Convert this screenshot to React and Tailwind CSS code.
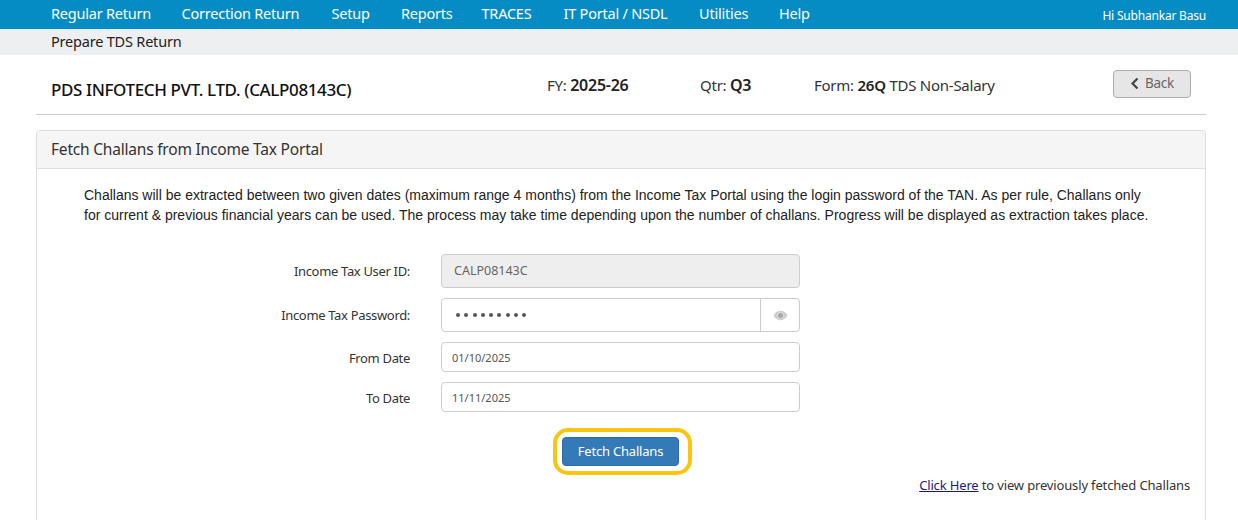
import React from "react";

const ui = "font-['Noto_Sans',sans-serif]";

const navItems = [
  ["Regular Return", "w-[130.5px]"],
  ["Correction Return", "w-[150px]"],
  ["Setup", "w-[69.5px]"],
  ["Reports", "w-[80.5px]"],
  ["TRACES", "w-[82px]"],
  ["IT Portal / NSDL", "w-[135.5px]"],
  ["Utilities", "w-[80px]"],
  ["Help", "w-[60px]"],
];

const FormRow = ({ label, className, labelClass = "pt-[1px]", children }) => (
  <div className={`flex items-center ${className}`}>
    <label className={`w-[410px] ${labelClass} text-right text-[13px] tracking-[-0.33px] text-[#333]`}>{label}</label>
    <div className="ml-[31px] w-[359px]">{children}</div>
  </div>
);

const App = () => {
  return (
    <div className={`${ui} w-[1238px] h-[520px] overflow-hidden bg-white`}>
      <nav className="h-[29px] bg-[#058cc4] flex items-center pl-[51px] pr-[32px] text-white">
        {navItems.map(([item, width]) => (
          <a key={item} className={`${width} pb-[2px] text-[14.5px] tracking-[-0.22px] whitespace-nowrap`}>
            {item}
          </a>
        ))}
        <span className="ml-auto text-[12px] tracking-[-0.2px] pt-[3px]">Hi Subhankar Basu</span>
      </nav>
      <div className="h-[26px] bg-[#eeeff1] pl-[51px] flex items-center text-[14.5px] tracking-[-0.2px] text-[#222]">
        Prepare TDS Return
      </div>

      <div className="ml-[36px] mr-[32px] h-[60px] border-b border-[#ccc] flex items-center px-[15px] text-[15px] tracking-[-0.25px] text-[#333]">
        <h1 className="w-[496px] text-[17px] font-medium tracking-[-0.38px] text-[#111] pt-[11px]">
          PDS INFOTECH PVT. LTD. (CALP08143C)
        </h1>
        <span className="w-[153px] pt-[1px]">
          FY: <b className="text-[16px] font-semibold text-[#222]">2025-26</b>
        </span>
        <span className="w-[114px] pt-[1px]">
          Qtr: <b className="text-[16px] font-semibold text-[#222]">Q3</b>
        </span>
        <span className="pt-[1px]">
          Form: <b className="font-semibold text-[#222]">26Q</b> TDS Non-Salary
        </span>
        <button className="ml-auto mb-[2px] w-[78px] h-[28px] rounded-[4px] border border-[#adadad] bg-[#e6e6e6] flex items-center justify-center gap-[6px] text-[13.5px] text-[#666]">
          <svg width="9" height="13" viewBox="0 0 9 13" fill="none" stroke="#444" strokeWidth="2.2">
            <path d="M7.5 1.5 2.5 6.5l5 5" />
          </svg>
          Back
        </button>
      </div>

      <section className="ml-[36px] mr-[32px] mt-[15px] h-[400px] rounded-t-[4px] border border-[#ddd]">
        <div className="h-[38px] bg-[#f5f5f5] border-b border-[#ddd] rounded-t-[4px] pl-[14px] flex items-center text-[15.5px] tracking-[-0.2px] text-[#333]">
          Fetch Challans from Income Tax Portal
        </div>

        <p className="mt-[16px] ml-[47px] w-[1080px] font-['Liberation_Sans',sans-serif] text-[14px] leading-[20px] text-[#222] whitespace-nowrap">
          Challans will be extracted between two given dates (maximum range 4 months) from the Income Tax Portal using the login password of the TAN. As per rule, Challans only
          <br />
          for current &amp; previous financial years can be used. The process may take time depending upon the number of challans. Progress will be displayed as extraction takes place.
        </p>

        <div className="mt-[29px] -ml-[37px]">
          <FormRow label="Income Tax User ID:">
            <div className="h-[34px] rounded-[4px] border border-[#ccc] bg-[#eee] pl-[12px] flex items-center text-[12.5px] text-[#666]">
              CALP08143C
            </div>
          </FormRow>
          <FormRow label="Income Tax Password:" className="mt-[10px]">
            <div className="h-[34px] rounded-[4px] border border-[#ccc] flex">
              <div className="flex-1 pl-[14px] flex items-center gap-[4.25px]">
                {Array.from({ length: 9 }).map((_, i) => (
                  <span key={i} className="w-[4px] h-[4px] rounded-full bg-[#555]" />
                ))}
              </div>
              <div className="w-[39px] border-l border-[#ccc] flex items-center justify-center">
                <svg width="15" height="11" viewBox="0 0 15 11">
                  <path d="M.5 5.5C2.5 2.2 5 .8 7.5.8s5 1.4 7 4.7c-2 3.3-4.5 4.7-7 4.7S2.5 8.8.5 5.5Z" fill="#ccc" />
                  <circle cx="7.5" cy="5.5" r="3.2" fill="#a9a9a9" stroke="#eee" strokeWidth="0.8" />
                </svg>
              </div>
            </div>
          </FormRow>
          <FormRow label="From Date" labelClass="pt-[4px]" className="mt-[10px]">
            <div className="h-[30px] rounded-[4px] border border-[#ccc] pl-[10px] pt-[2px] flex items-center text-[11px] text-[#555]">
              01/10/2025
            </div>
          </FormRow>
          <FormRow label="To Date" labelClass="pt-[4px]" className="mt-[10px]">
            <div className="h-[30px] rounded-[4px] border border-[#ccc] pl-[10px] pt-[2px] flex items-center text-[11px] text-[#555]">
              11/11/2025
            </div>
          </FormRow>
        </div>

        <div className="mt-[16px] flex justify-center ml-[2px]">
          <div className="w-[139px] h-[47px] rounded-[15px] border-[4px] border-[#fcc30f] flex items-center justify-center pr-[3px]">
            <button className="w-[117px] h-[29px] rounded-[4px] border border-[#2e6da4] bg-[#337ab7] text-white text-[13px] tracking-[-0.2px]">
              Fetch Challans
            </button>
          </div>
        </div>

        <p className="mt-[1px] pr-[15px] text-right text-[13px] tracking-[-0.15px] text-[#333]">
          <a className="underline text-[#1a1a7e]">Click Here</a> to view previously fetched Challans
        </p>
      </section>
    </div>
  );
};

export default App;
